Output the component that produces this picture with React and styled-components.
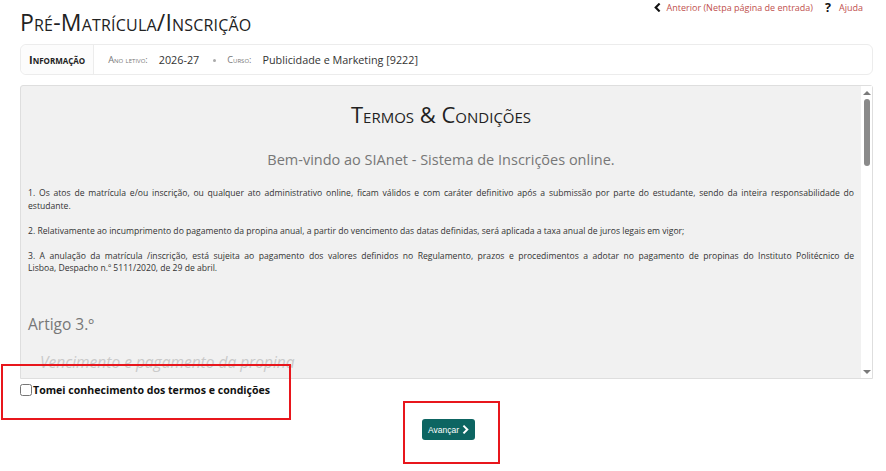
import React from "react";
import styled, { createGlobalStyle } from "styled-components";

const COLORS = {
  text: "#222",
  muted: "#777",
  faint: "#c9c9c9",
  link: "#c0504d",
  teal: "#0d6562",
  panel: "#f1f1f1",
  border: "#dedede",
  marker: "#e8161c",
};

const GlobalStyle = createGlobalStyle`
  body {
    margin: 0;
    background: #fff;
    font-family: "Open Sans", "DejaVu Sans", sans-serif;
    color: ${COLORS.text};
  }
`;

const Page = styled.div`
  position: relative;
  width: 886px;
  height: 471px;
  padding: 0 13px 0 20px;
  box-sizing: border-box;
  overflow: hidden;
`;

const TopBar = styled.header`
  display: flex;
  justify-content: space-between;
  align-items: flex-start;
  height: 44px;
`;

const Title = styled.h1`
  margin: 6px 0 0;
  font-size: 23px;
  font-weight: 400;
  font-variant: small-caps;
  letter-spacing: 0.2px;
  color: #222;
`;

const Links = styled.nav`
  display: flex;
  align-items: center;
  gap: 12px;
  margin: 1px 10px 0 0;
  line-height: 1.1;
`;

const LinkItem = styled.a`
  display: flex;
  align-items: center;
  gap: 5px;
  font-size: 9px;
  color: ${COLORS.link};
  text-decoration: none;
  svg {
    color: #111;
  }
`;

const Qmark = styled.span`
  font-size: 12.5px;
  font-weight: 700;
  color: #111;
  margin-right: 3px;
`;

const InfoBar = styled.section`
  display: flex;
  align-items: stretch;
  height: 31px;
  border: 1px solid #ececec;
  border-radius: 6px;
  box-sizing: border-box;
`;

const InfoLabel = styled.div`
  display: flex;
  align-items: center;
  padding: 0 8px;
  font-size: 11px;
  font-weight: 700;
  font-variant: small-caps;
  border-right: 1px solid #ececec;
  background: #fcfcfc;
  border-radius: 6px 0 0 6px;
`;

const InfoItems = styled.div`
  display: flex;
  align-items: center;
  padding-left: 14px;
  gap: 9px;
`;

const Field = styled.span`
  font-size: 9.2px;
  font-variant: small-caps;
  color: ${COLORS.muted};
  margin-right: 2px;
`;

const Value = styled.span`
  font-size: 10.8px;
  color: #333;
`;

const Dot = styled.span`
  width: 3px;
  height: 3px;
  border-radius: 50%;
  background: #aaa;
  margin: 2px 2px 0 5px;
`;

const TermsBox = styled.div`
  display: flex;
  margin-top: 10px;
  height: 294px;
  background: ${COLORS.panel};
  border: 1px solid ${COLORS.border};
  border-radius: 3px 3px 0 0;
  box-sizing: border-box;
`;

const TermsContent = styled.div`
  flex: 1;
  overflow: hidden;
  padding: 0 7px;
`;

const TermsTitle = styled.h2`
  margin: 13px 0 0;
  text-align: center;
  font-size: 22px;
  font-weight: 400;
  font-variant: small-caps;
  color: #222;
`;

const Welcome = styled.p`
  margin: 21px 0 0;
  text-align: center;
  font-size: 14.5px;
  color: ${COLORS.muted};
`;

const Clause = styled.p`
  margin: ${({ first }) => (first ? "18px" : "12.5px")} 0 0;
  font-size: 8.6px;
  line-height: 12.5px;
  text-align: justify;
  color: #333;
`;

const Article = styled.h3`
  margin: 38px 0 0;
  font-size: 15.5px;
  font-weight: 400;
  color: ${COLORS.muted};
`;

const ArticleSub = styled.h4`
  margin: 16px 0 0 12px;
  font-size: 15.5px;
  font-weight: 400;
  font-style: italic;
  color: ${COLORS.faint};
`;

const ScrollTrack = styled.div`
  width: 11px;
  background: #fff;
  display: flex;
  flex-direction: column;
  align-items: center;
  padding: 5px 0 4px;
  box-sizing: border-box;
`;

const Arrow = styled.span`
  width: 0;
  height: 0;
  border-left: 4px solid transparent;
  border-right: 4px solid transparent;
  ${({ down }) =>
    down
      ? `border-top: 4px solid #7a7a7a; margin-top: auto;`
      : `border-bottom: 4px solid #7a7a7a;`}
`;

const Thumb = styled.span`
  width: 6px;
  height: 67px;
  margin-top: 4px;
  border-radius: 3px;
  background: #8a8a8a;
`;

const AgreeRow = styled.label`
  display: flex;
  align-items: center;
  gap: 1px;
  margin-top: 4px;
  font-size: 10.6px;
  font-weight: 700;
  color: #111;
`;

const Check = styled.input`
  margin: 0;
  width: 12px;
  height: 12px;
`;

const Actions = styled.div`
  display: flex;
  justify-content: center;
  margin-top: 22px;
  padding-left: 4px;
`;

const NextButton = styled.button`
  display: flex;
  align-items: center;
  gap: 2px;
  height: 21px;
  padding: 0 5px 0 6px;
  border: none;
  border-radius: 3px;
  background: ${COLORS.teal};
  color: #fff;
  font-family: "Liberation Sans", Arial, sans-serif;
  font-size: 8.5px;
`;

const Marker = styled.div`
  position: absolute;
  border: 2px solid ${COLORS.marker};
  box-sizing: border-box;
`;

const Chevron = ({ dir = "left", size = 9, width = 2.4 }) => (
  <svg width={size} height={size} viewBox="0 0 10 10" fill="none">
    <path
      d={dir === "left" ? "M6.5 1.5 L3 5 L6.5 8.5" : "M3.5 1.5 L7 5 L3.5 8.5"}
      stroke="currentColor"
      strokeWidth={width}
      strokeLinecap="square"
    />
  </svg>
);

export default function App() {
  return (
    <>
      <GlobalStyle />
      <Page>
        <TopBar>
          <Title>Pré-Matrícula/Inscrição</Title>
          <Links>
            <LinkItem href="#">
              <Chevron dir="left" size={9} />
              Anterior (Netpa página de entrada)
            </LinkItem>
            <LinkItem href="#">
              <Qmark>?</Qmark>
              Ajuda
            </LinkItem>
          </Links>
        </TopBar>

        <InfoBar>
          <InfoLabel>Informação</InfoLabel>
          <InfoItems>
            <Field>Ano letivo:</Field>
            <Value>2026-27</Value>
            <Dot />
            <Field>Curso:</Field>
            <Value>Publicidade e Marketing [9222]</Value>
          </InfoItems>
        </InfoBar>

        <TermsBox>
          <TermsContent>
            <TermsTitle>Termos &amp; Condições</TermsTitle>
            <Welcome>Bem-vindo ao SIAnet - Sistema de Inscrições online.</Welcome>
            <Clause first>
              1. Os atos de matrícula e/ou inscrição, ou qualquer ato
              administrativo online, ficam válidos e com caráter definitivo
              após a submissão por parte do estudante, sendo da inteira
              responsabilidade do estudante.
            </Clause>
            <Clause>
              2. Relativamente ao incumprimento do pagamento da propina anual, a
              partir do vencimento das datas definidas, será aplicada a taxa
              anual de juros legais em vigor;
            </Clause>
            <Clause>
              3. A anulação da matrícula /inscrição, está sujeita ao pagamento
              dos valores definidos no Regulamento, prazos e procedimentos a
              adotar no pagamento de propinas do Instituto Politécnico de
              Lisboa,&nbsp;Despacho n.º 5111/2020, de 29 de abril.
            </Clause>
            <Article>Artigo 3.º</Article>
            <ArticleSub>Vencimento e pagamento da propina</ArticleSub>
          </TermsContent>
          <ScrollTrack>
            <Arrow />
            <Thumb />
            <Arrow down />
          </ScrollTrack>
        </TermsBox>

        <AgreeRow>
          <Check type="checkbox" />
          Tomei conhecimento dos termos e condições
        </AgreeRow>

        <Actions>
          <NextButton>
            Avançar
            <Chevron dir="right" size={9} width={2.2} />
          </NextButton>
        </Actions>

        <Marker style={{ left: 1, top: 364, width: 290, height: 56 }} />
        <Marker style={{ left: 403, top: 401, width: 97, height: 63 }} />
      </Page>
    </>
  );
}
